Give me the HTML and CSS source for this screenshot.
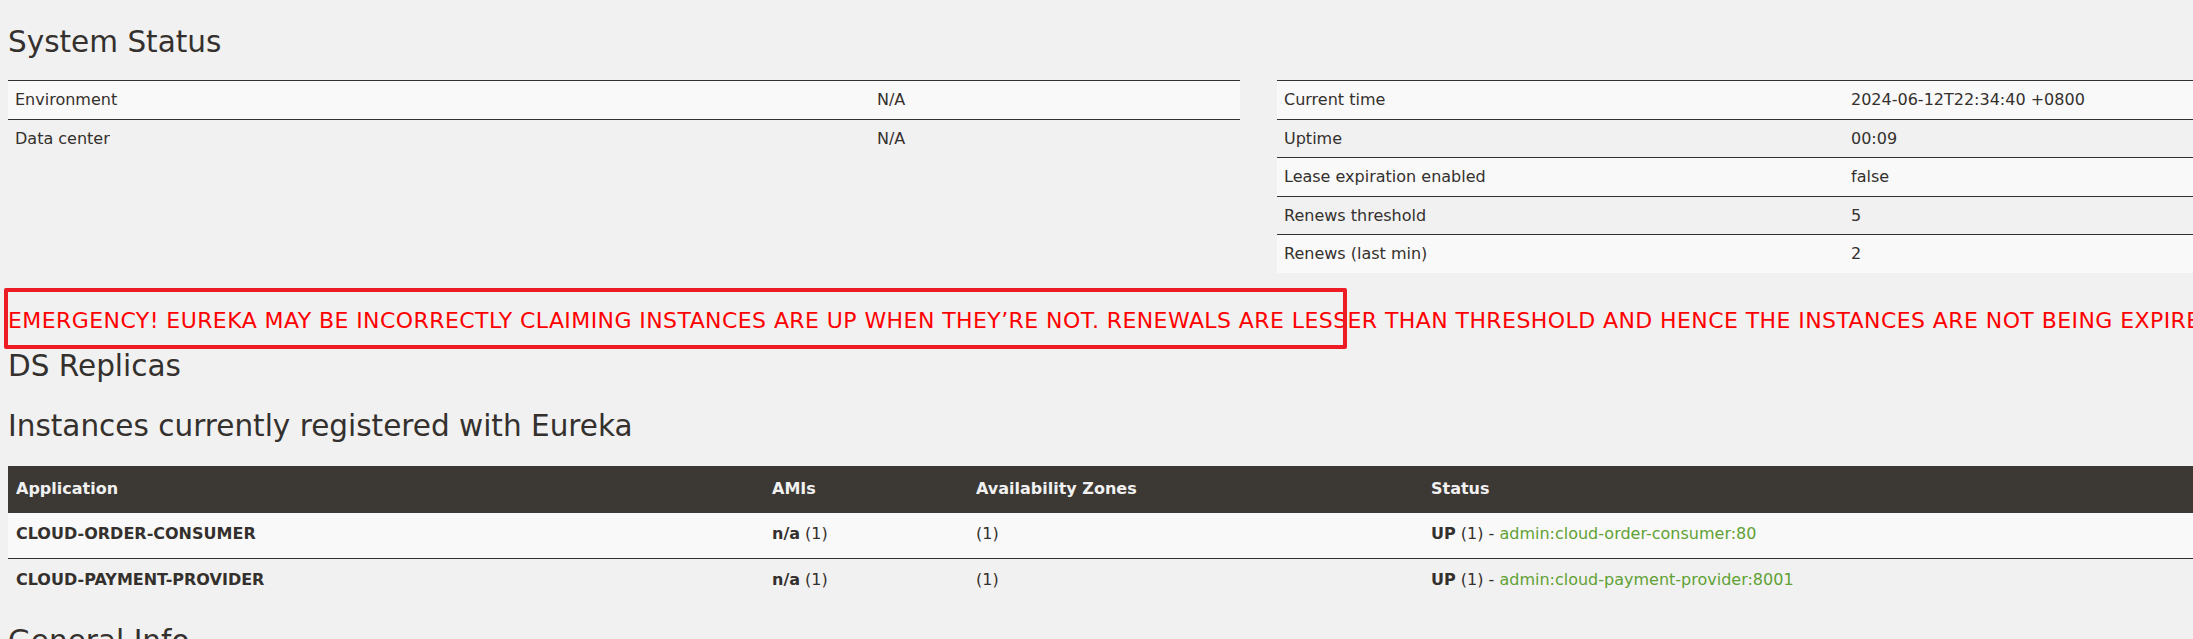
FILE: index.html
```html
<!DOCTYPE html>
<html lang="en">
<head>
<meta charset="utf-8">
<title>Eureka</title>
<link rel="stylesheet" href="styles.css">
</head>
<body>
<div class="page">
  <h1 class="title title-first">System Status</h1>
  <div class="status-grid">
    <table class="info info-left">
      <colgroup><col class="c-left-key"><col></colgroup>
      <tbody>
        <tr class="odd"><td>Environment</td><td>N/A</td></tr>
        <tr><td>Data center</td><td>N/A</td></tr>
      </tbody>
    </table>
    <table class="info info-right">
      <colgroup><col class="c-right-key"><col></colgroup>
      <tbody>
        <tr class="odd"><td>Current time</td><td>2024-06-12T22:34:40 +0800</td></tr>
        <tr><td>Uptime</td><td>00:09</td></tr>
        <tr class="odd"><td>Lease expiration enabled</td><td>false</td></tr>
        <tr><td>Renews threshold</td><td>5</td></tr>
        <tr class="odd"><td>Renews (last min)</td><td>2</td></tr>
      </tbody>
    </table>
  </div>
  <div class="emergency">EMERGENCY! EUREKA MAY BE INCORRECTLY CLAIMING INSTANCES ARE UP WHEN THEY’RE NOT. RENEWALS ARE LESSER THAN THRESHOLD AND HENCE THE INSTANCES ARE NOT BEING EXPIRED JUST TO BE SAFE.</div>
  <h1 class="title title-ds">DS Replicas</h1>
  <h1 class="title title-inst">Instances currently registered with Eureka</h1>
  <table class="apps">
    <colgroup><col class="c-app"><col class="c-ami"><col class="c-az"><col></colgroup>
    <thead>
      <tr><th>Application</th><th>AMIs</th><th>Availability Zones</th><th>Status</th></tr>
    </thead>
    <tbody>
      <tr class="odd">
        <td><b>CLOUD-ORDER-CONSUMER</b></td>
        <td><b>n/a</b> (1)</td>
        <td>(1)</td>
        <td><b>UP</b> (1) - <a class="inst-link" href="#">admin:cloud-order-consumer:80</a></td>
      </tr>
      <tr>
        <td><b>CLOUD-PAYMENT-PROVIDER</b></td>
        <td><b>n/a</b> (1)</td>
        <td>(1)</td>
        <td><b>UP</b> (1) - <a class="inst-link" href="#">admin:cloud-payment-provider:8001</a></td>
      </tr>
    </tbody>
  </table>
  <h1 class="title title-gen">General Info</h1>
  <div class="annot"></div>
</div>
</body>
</html>
```
FILE: styles.css
```css
html, body {
  margin: 0;
  padding: 0;
  background: #f1f1f1;
  overflow: hidden;
}
body {
  font-family: "DejaVu Sans", "Noto Sans", sans-serif;
  font-size: 16px;
  color: #34302d;
}
.page {
  position: relative;
  display: flow-root;
  padding-left: 8px;
}
.title {
  font-family: "DejaVu Sans", "Noto Sans", sans-serif;
  font-weight: normal;
  font-size: 29.5px;
  line-height: 36px;
  margin: 0;
  color: #34302d;
  white-space: nowrap;
}
.title-first { margin-top: 24px; margin-bottom: 20px; }
.title-ds { margin-top: 13.75px; }
.title-inst { margin-top: 24.7px; }
.title-gen { margin-top: 19px; }

.status-grid {
  display: grid;
  grid-template-columns: 1232px 1fr;
  column-gap: 37px;
  align-items: start;
}
table {
  border-collapse: separate;
  border-spacing: 0;
  table-layout: fixed;
  width: 100%;
}
.info td {
  border-top: 1px solid #34302d;
  padding: 8px 7px;
  line-height: 21.5px;
  white-space: nowrap;
  text-align: left;
}
.info tr.odd td { background: #f9f9f9; }
.c-left-key { width: 862px; }
.c-right-key { width: 567px; }

.emergency {
  margin-top: 35.5px;
  font-family: "DejaVu Sans", sans-serif;
  font-size: 22px;
  letter-spacing: 0.42px;
  line-height: 26px;
  color: #ff0000;
  white-space: nowrap;
  overflow: hidden;
}

.apps { margin-top: 21.5px; }
.apps th {
  background: #3c3834;
  color: #f1f1f1;
  font-weight: bold;
  text-align: left;
  padding: 12px 8px;
  line-height: 22px;
  white-space: nowrap;
}
.apps td {
  border-top: 1px solid #34302d;
  padding: 10px 8px 13px;
  line-height: 22px;
  white-space: nowrap;
}
.apps tbody tr:first-child td { border-top-color: #3c3834; }
.apps tr.odd td { background: #f9f9f9; }
.c-app { width: 756px; }
.c-ami { width: 204px; }
.c-az { width: 455px; }
.inst-link {
  color: #5fa134;
  text-decoration: none;
}

.annot {
  position: absolute;
  left: 4px;
  top: 288px;
  width: 1335px;
  height: 53px;
  border: 4px solid #ed1c24;
  border-radius: 2px;
  pointer-events: none;
}
```
